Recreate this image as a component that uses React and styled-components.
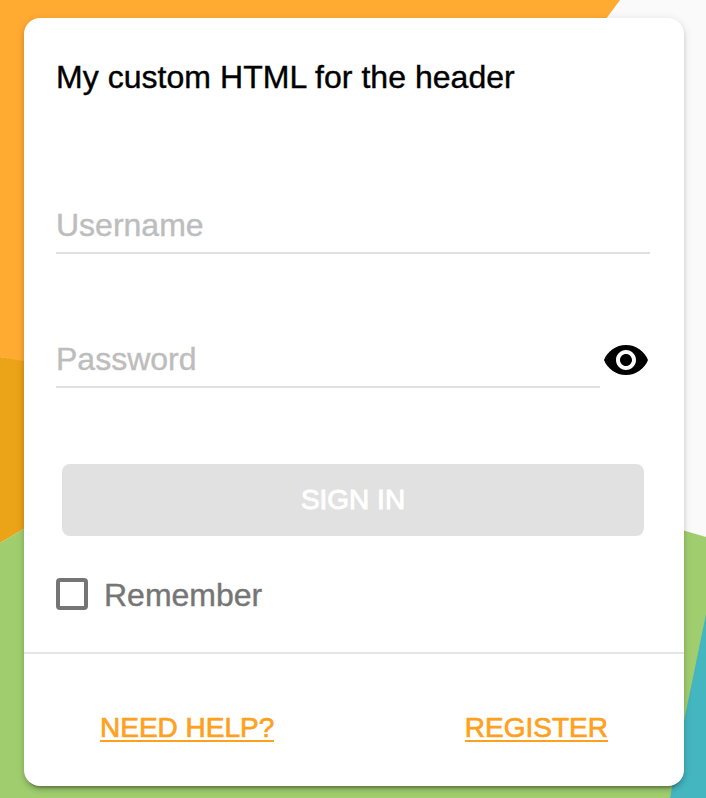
import React, { useState } from "react";
import styled, { createGlobalStyle } from "styled-components";

const GlobalStyle = createGlobalStyle`
  *, *::before, *::after { box-sizing: border-box; }
  body {
    margin: 0;
    background: #fafafa;
    font-family: "Liberation Sans", Helvetica, Arial, sans-serif;
    overflow: hidden;
  }
`;

const Page = styled.main`
  position: relative;
  width: 706px;
  height: 798px;
  padding: 18px 22px 12px 24px;
  overflow: hidden;
`;

const Backdrop = styled.svg`
  position: absolute;
  inset: 0;
  width: 100%;
  height: 100%;
`;

const Card = styled.section`
  position: relative;
  display: flex;
  flex-direction: column;
  height: 768px;
  background: #fff;
  border-radius: 16px;
  box-shadow:
    0 6px 2px -4px rgba(0, 0, 0, 0.2),
    0 4px 4px 0 rgba(0, 0, 0, 0.14),
    0 2px 10px 0 rgba(0, 0, 0, 0.12);
`;

const Header = styled.header`
  padding: 41px 32px 0;
  height: 168px;
  font-size: 32px;
  line-height: 36px;
  letter-spacing: 0.04px;
  color: #000;
  -webkit-text-stroke: 0.4px #000;
`;

const Form = styled.form`
  display: flex;
  flex-direction: column;
  flex: 1;
  padding: 0 34px 0 32px;
`;

const FieldRow = styled.div`
  display: flex;
  height: 68px;
  margin-bottom: 66px;
`;

const Input = styled.input`
  flex: 1;
  min-width: 0;
  height: 68px;
  padding: 12px 0 0;
  border: 0;
  border-bottom: 2px solid #e0e0e0;
  border-radius: 0;
  outline: none;
  background: transparent;
  font: 32px "Liberation Sans", Helvetica, Arial, sans-serif;
  color: #000;
  &::placeholder {
    color: #bdbdbd;
    opacity: 1;
    -webkit-text-stroke: 0.4px #bdbdbd;
  }
`;

const IconButton = styled.button`
  display: block;
  width: 50px;
  height: 48px;
  margin-top: 16px;
  padding: 0 0 0 2px;
  border: 0;
  background: none;
`;

const EyeIcon = styled.svg`
  display: block;
  width: 48px;
  height: 48px;
  fill: #000;
`;

const SignIn = styled.button`
  height: 72px;
  margin: 10px 6px 42px;
  padding: 0;
  border: 0;
  border-radius: 8px;
  background: #e1e1e1;
  color: #fff;
  font: 28px/72px "Liberation Sans", Helvetica, Arial, sans-serif;
  -webkit-text-stroke: 1px #fff;
`;

const Remember = styled.label`
  display: flex;
  align-items: center;
  align-self: flex-start;
  gap: 16px;
  height: 32px;
  font-size: 32px;
  line-height: 36px;
  color: #757575;
  -webkit-text-stroke: 0.4px #757575;
`;

const Checkbox = styled.input`
  appearance: none;
  width: 32px;
  height: 32px;
  margin: 0;
  border: 4px solid #757575;
  border-radius: 4px;
  background: ${(p) => (p.checked ? "#757575" : "transparent")};
`;

const LabelText = styled.span`
  padding-top: 2px;
`;

const Footer = styled.footer`
  display: flex;
  justify-content: space-between;
  height: 134px;
  padding: 58px 76px 0;
  border-top: 2px solid #e5e5e5;
`;

const Link = styled.a`
  height: 30px;
  border-bottom: 2px solid #ffa01e;
  color: #ffa01e;
  font-size: 28px;
  line-height: 32px;
  -webkit-text-stroke: 0.7px #ffa01e;
  text-decoration: none;
`;

export default function App() {
  const [remember, setRemember] = useState(false);
  return (
    <>
      <GlobalStyle />
      <Page>
        <Backdrop viewBox="0 0 706 798" aria-hidden="true">
          <path d="M0 0H620L360 350L200 400L0 357Z" fill="#ffab32" />
          <path d="M0 357L200 392L100 484L0 543Z" fill="#eba317" />
          <path d="M0 543L350 336L350 432L706 537V798H0Z" fill="#a0ce6e" />
          <path d="M706 614L685 716L670 798H706Z" fill="#44b6bf" />
        </Backdrop>
        <Card>
          <Header>My custom HTML for the header</Header>
          <Form onSubmit={(e) => e.preventDefault()}>
            <FieldRow>
              <Input placeholder="Username" />
            </FieldRow>
            <FieldRow>
              <Input type="password" placeholder="Password" />
              <IconButton type="button" aria-label="Show password">
                <EyeIcon viewBox="0 0 24 24">
                  <path d="M12 4.5C7 4.5 2.73 7.61 1 12c1.73 4.39 6 7.5 11 7.5s9.27-3.11 11-7.5c-1.73-4.39-6-7.5-11-7.5zM12 17c-2.76 0-5-2.24-5-5s2.24-5 5-5 5 2.24 5 5-2.24 5-5 5zm0-8c-1.66 0-3 1.34-3 3s1.34 3 3 3 3-1.34 3-3-1.34-3-3-3z" />
                </EyeIcon>
              </IconButton>
            </FieldRow>
            <SignIn type="submit" disabled>SIGN IN</SignIn>
            <Remember>
              <Checkbox
                type="checkbox"
                checked={remember}
                onChange={(e) => setRemember(e.target.checked)}
              />
              <LabelText>Remember</LabelText>
            </Remember>
          </Form>
          <Footer>
            <Link href="#">NEED HELP?</Link>
            <Link href="#">REGISTER</Link>
          </Footer>
        </Card>
      </Page>
    </>
  );
}
